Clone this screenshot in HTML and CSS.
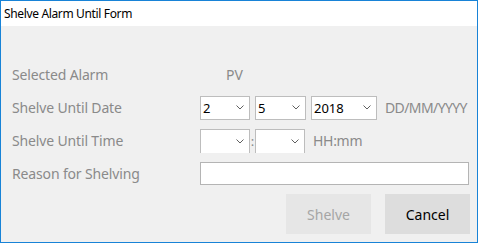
FILE: index.html
```html
<!DOCTYPE html>
<html lang="en">
<head>
  <meta charset="UTF-8">
  <title>Shelve Alarm Until Form</title>
  <link rel="stylesheet" href="styles.css">
</head>
<body>
<div class="window">
  <div class="title-bar">Shelve Alarm Until Form</div>
  <div class="form">
    <div class="row">
      <div class="label">Selected Alarm</div>
      <div class="field"><span class="alarm-name">PV</span></div>
    </div>
    <div class="row">
      <div class="label">Shelve Until Date</div>
      <div class="field">
        <div class="combo w-day"><span>2</span><svg class="chev" width="8" height="5" viewBox="0 0 8 5"><path d="M0.5 0.5 L4 4 L7.5 0.5" /></svg></div>
        <div class="combo w-month"><span>5</span><svg class="chev" width="8" height="5" viewBox="0 0 8 5"><path d="M0.5 0.5 L4 4 L7.5 0.5" /></svg></div>
        <div class="combo w-year"><span>2018</span><svg class="chev" width="8" height="5" viewBox="0 0 8 5"><path d="M0.5 0.5 L4 4 L7.5 0.5" /></svg></div>
        <span class="hint">DD/MM/YYYY</span>
      </div>
    </div>
    <div class="row">
      <div class="label">Shelve Until Time</div>
      <div class="field">
        <div class="combo w-day cut"><span></span><svg class="chev" width="8" height="5" viewBox="0 0 8 5"><path d="M0.5 0.5 L4 4 L7.5 0.5" /></svg></div>
        <span class="colon">:</span>
        <div class="combo w-min cut"><span></span><svg class="chev" width="8" height="5" viewBox="0 0 8 5"><path d="M0.5 0.5 L4 4 L7.5 0.5" /></svg></div>
        <span class="hint">HH:mm</span>
      </div>
    </div>
    <div class="row">
      <div class="label">Reason for Shelving</div>
      <div class="field"><input type="text" class="reason"></div>
    </div>
    <div class="buttons">
      <button disabled>Shelve</button>
      <button>Cancel</button>
    </div>
  </div>
</div>
</body>
</html>
```

FILE: styles.css
```css
body {
  margin: 0;
  font-family: 'Noto Sans', 'Open Sans', sans-serif;
}

.window {
  width: 478px;
  height: 243px;
  box-sizing: border-box;
  border: 1px solid #1883d7;
  background-color: #f0f0f0;
}

.title-bar {
  height: 25px;
  background-color: #ffffff;
  color: #000000;
  font-size: 12px;
  letter-spacing: -0.35px;
  line-height: 25px;
  padding-left: 3px;
}

.form {
  padding: 32px 0 0 11px;
}

.row {
  display: grid;
  grid-template-columns: 188px auto;
  align-items: center;
  height: 33px;
}

.label {
  color: #8a8a8a;
  font-size: 14px;
  letter-spacing: -0.15px;
}

.field {
  display: flex;
  align-items: center;
}

.alarm-name {
  margin-left: 26px;
  color: #8a8a8a;
  font-size: 14px;
}

.combo {
  display: flex;
  align-items: center;
  justify-content: space-between;
  height: 24px;
  box-sizing: border-box;
  border: 1px solid #bdbdbd;
  background-color: #ffffff;
  padding: 0 5px 0 2px;
  font-size: 13px;
  color: #000000;
  margin-right: 5px;
}

.combo.cut {
  border-bottom: none;
  margin-right: 0;
}

.chev path {
  fill: none;
  stroke: #606060;
  stroke-width: 1;
}

.w-day { width: 50px; }
.w-month { width: 51px; }
.w-year { width: 66px; }
.w-min { width: 50px; }

.hint {
  color: #8a8a8a;
  font-size: 14px;
  letter-spacing: -0.6px;
  margin-left: 3px;
}

.colon {
  width: 5px;
  text-align: center;
  color: #8a8a8a;
  font-size: 13px;
}

.combo.w-min + .hint {
  margin-left: 8px;
  letter-spacing: -0.3px;
}

.reason {
  width: 269px;
  height: 23px;
  box-sizing: border-box;
  border: 1px solid #b4b4b4;
  background-color: #ffffff;
  margin: 0;
}

.buttons {
  display: flex;
  justify-content: flex-end;
  gap: 14px;
  margin-top: 4px;
  padding-right: 7px;
}

.buttons button {
  width: 85px;
  height: 40px;
  border: none;
  background-color: #dddddd;
  color: #000000;
  font-family: 'Noto Sans', 'Open Sans', sans-serif;
  font-size: 14px;
}

.buttons button:disabled {
  background-color: #e6e6e6;
  color: #a5a5a5;
}
```
